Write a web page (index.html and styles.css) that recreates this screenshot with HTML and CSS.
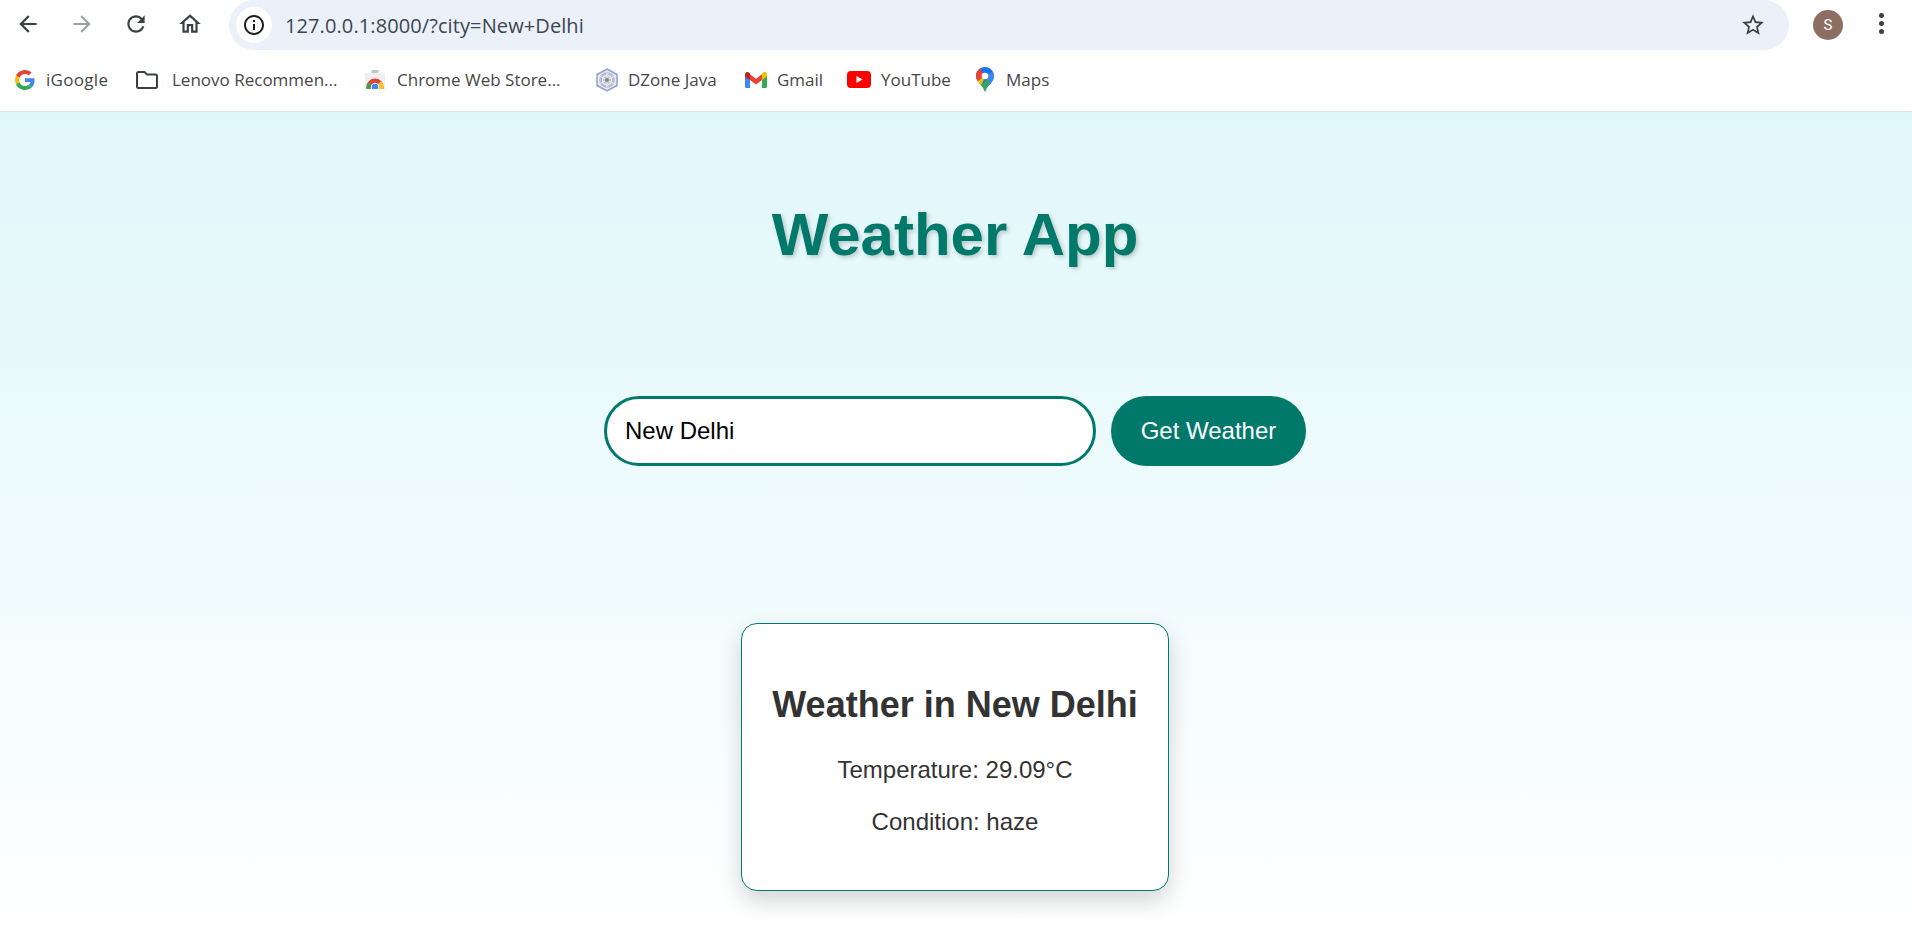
FILE: index.html
```html
<!DOCTYPE html>
<html lang="en">
<head>
<meta charset="utf-8">
<title>Weather App</title>
<link rel="stylesheet" href="styles.css">
</head>
<body>
<header class="chrome">
  <div class="toolbar">
    <div class="nav">
      <svg class="nav-icon" viewBox="0 0 24 24"><path d="M20 11H7.83l5.59-5.59L12 4l-8 8 8 8 1.41-1.41L7.83 13H20v-2z"/></svg>
      <svg class="nav-icon off" viewBox="0 0 24 24"><path d="M12 4l-1.41 1.41L16.17 11H4v2h12.17l-5.58 5.59L12 20l8-8z"/></svg>
      <svg class="nav-icon" viewBox="0 0 24 24"><path d="M17.65 6.35C16.2 4.9 14.21 4 12 4c-4.42 0-7.99 3.58-7.99 8s3.57 8 7.99 8c3.73 0 6.84-2.55 7.73-6h-2.08c-.82 2.33-3.04 4-5.65 4-3.31 0-6-2.69-6-6s2.69-6 6-6c1.66 0 3.14.69 4.22 1.78L13 11h7V4l-2.35 2.35z"/></svg>
      <svg class="nav-icon" viewBox="0 0 24 24"><path d="M12 5.69l5 4.5V18h-2v-6H9v6H7v-7.81l5-4.5M12 3L2 12h3v8h6v-6h2v6h6v-8h3L12 3z"/></svg>
    </div>
    <div class="omnibox">
      <span class="site-info">
        <svg class="info-icon" viewBox="0 0 24 24"><path d="M11 7h2v2h-2zm0 4h2v6h-2zm1-9C6.48 2 2 6.48 2 12s4.48 10 10 10 10-4.48 10-10S17.52 2 12 2zm0 18c-4.41 0-8-3.59-8-8s3.59-8 8-8 8 3.59 8 8-3.59 8-8 8z"/></svg>
      </span>
      <span class="url">127.0.0.1:8000/?city=New+Delhi</span>
      <svg class="star" viewBox="0 0 24 24"><path d="M22 9.24l-7.19-.62L12 2 9.19 8.63 2 9.24l5.46 4.73L5.82 21 12 17.27 18.18 21l-1.64-7.03L22 9.24zM12 15.4l-3.76 2.27 1-4.28-3.32-2.88 4.38-.38L12 6.1l1.71 4.04 4.38.38-3.32 2.88 1 4.28L12 15.4z"/></svg>
    </div>
    <span class="avatar">S</span>
    <span class="menu"><i></i><i></i><i></i></span>
  </div>
  <nav class="bookmarks">
    <a class="bm bm-google">
      <svg class="bm-icon" viewBox="0 0 48 48"><path fill="#EA4335" d="M24 9.5c3.5 0 6.7 1.3 9.1 3.4l6.8-6.8C35.800 2.400 30.200 0 24 0 14.600 0 6.500 5.400 2.600 13.200l7.900 6.200C12.400 13.700 17.700 9.500 24 9.500z"/><path fill="#4285F4" d="M46.900 24.500c0-1.600-.1-3.100-.4-4.500H24v9h12.900c-.6 3-2.200 5.500-4.700 7.200l7.700 6c4.500-4.200 7-10.300 7-17.700z"/><path fill="#FBBC05" d="M10.500 28.600c-.5-1.400-.8-3-.8-4.600s.3-3.200.8-4.600l-7.900-6.200C.900 16.500 0 20.100 0 24s.9 7.500 2.600 10.800l7.900-6.200z"/><path fill="#34A853" d="M24 48c6.500 0 11.900-2.100 15.900-5.800l-7.700-6c-2.200 1.500-4.900 2.300-8.200 2.300-6.300 0-11.600-4.200-13.500-9.900l-7.900 6.200C6.500 42.600 14.600 48 24 48z"/></svg>
      <span>iGoogle</span>
    </a>
    <a class="bm bm-lenovo">
      <svg class="bm-icon folder" viewBox="0 0 24 20"><path fill="none" stroke="#3c4043" stroke-width="2" stroke-linejoin="round" d="M2 3.500a1.500 1.500 0 0 1 1.500-1.500h6l2.500 2.500h8.500A1.500 1.500 0 0 1 22 6v10.500a1.500 1.500 0 0 1-1.500 1.500h-17A1.500 1.500 0 0 1 2 16.500z"/></svg>
      <span>Lenovo Recommen...</span>
    </a>
    <a class="bm bm-store">
      <svg class="bm-icon" viewBox="0 0 20 20">
        <defs><clipPath id="bag"><rect x="0" y="3" width="20" height="16"/></clipPath></defs>
        <rect x="6.500" y="0" width="7" height="3" fill="#c4c4c4"/>
        <rect x="0" y="3" width="20" height="16" fill="#efefef"/>
        <g clip-path="url(#bag)">
          <circle cx="10" cy="17" r="8.500" fill="#db4437"/>
          <path d="M10 17L18.500 17A8.500 8.500 0 0 0 16 11z" fill="#fbc02d"/>
          <path d="M10 17L1.500 17A8.500 8.500 0 0 0 2 21L10 21z" fill="#34a853"/>
          <path d="M1.500 17A8.500 8.500 0 0 1 3 12.500L7 15.500z" fill="#34a853"/>
          <rect x="10" y="17" width="9" height="3" fill="#fbc02d"/>
          <circle cx="10" cy="17" r="4.200" fill="#fff"/>
          <circle cx="10" cy="17" r="3.300" fill="#4285f4"/>
        </g>
      </svg>
      <span>Chrome Web Store...</span>
    </a>
    <a class="bm bm-dzone">
      <svg class="bm-icon" viewBox="0 0 24 24"><path fill="#e6e9f1" stroke="#8c9fdc" stroke-width="1.500" d="M12 1l10 5.500v11L12 23 2 17.500v-11z"/><circle cx="12" cy="12" r="7.800" fill="#b8bdc6"/><circle cx="12" cy="12" r="4.500" fill="none" stroke="#eceef2" stroke-width="1.300"/><path stroke="#eceef2" d="M12 4.200v15.600M5.200 8.100l13.600 7.800M18.800 8.100L5.200 15.900"/><circle cx="12" cy="12" r="2" fill="#808791"/></svg>
      <span>DZone Java</span>
    </a>
    <a class="bm bm-gmail">
      <svg class="bm-icon" viewBox="0 0 22 16"><path fill="#4285F4" d="M0 3v11.500c0 .8.700 1.500 1.500 1.500H5V7.500L0 3z"/><path fill="#34A853" d="M17 7.500V16h3.500c.8 0 1.500-.7 1.500-1.500V3z"/><path fill="#EA4335" d="M5 8V2.200l6 4.500 6-4.500V8l-6 4.500z"/><path fill="#C5221F" d="M0 4.500v-2C0 .5 2.200-.6 3.800.5L5 1.500V8z"/><path fill="#FBBC04" d="M17 8V1.500L18.200.5C19.800-.6 22 .5 22 2.500v2z"/></svg>
      <span>Gmail</span>
    </a>
    <a class="bm bm-youtube">
      <svg class="bm-icon" viewBox="0 0 24 17"><rect width="24" height="17" rx="4" fill="#f00"/><path fill="#fff" d="M9.500 5v7l6-3.500z"/></svg>
      <span>YouTube</span>
    </a>
    <a class="bm bm-maps">
      <svg class="bm-icon" viewBox="0 0 18 25">
        <defs><clipPath id="pin"><path d="M9 0C4 0 0 4 0 9c0 2 .7 3.700 1.800 5.200C4 17.500 7.800 20 9 25c1.200-5 5-7.500 7.200-10.800C17.300 12.700 18 11 18 9 18 4 14 0 9 0z"/></clipPath></defs>
        <g clip-path="url(#pin)">
          <rect width="18" height="25" fill="#1a73e8"/>
          <path d="M18 4L9 9l3 16h6z" fill="#4285f4"/>
          <path d="M0 0h3L9 9 0 15z" fill="#ea4335"/>
          <path d="M0 15L9 9 5 20 0 20z" fill="#fbbc04"/>
          <path d="M12 12L18 25H0L0 20 5 18z" fill="#34a853"/>
          <path d="M13 12l5-3v10l-5 0z" fill="#4285f4"/>
        </g>
        <circle cx="9" cy="9" r="3.300" fill="#fff"/>
      </svg>
      <span>Maps</span>
    </a>
  </nav>
</header>
<main class="page">
  <h1 class="title">Weather App</h1>
  <form class="search">
    <input class="city" type="text" value="New Delhi">
    <button class="go" type="button">Get Weather</button>
  </form>
  <section class="card">
    <h2 class="card-title">Weather in New Delhi</h2>
    <p class="card-line">Temperature: 29.09°C</p>
    <p class="card-line">Condition: haze</p>
  </section>
</main>
</body>
</html>
```
FILE: styles.css
```css
* { box-sizing: border-box; }
html, body { margin: 0; height: 100%; overflow: hidden; }
body {
  display: flex;
  flex-direction: column;
  font-family: "Liberation Sans", Arial, sans-serif;
  background: #fff;
}
.chrome {
  flex: none;
  height: 112px;
  background: #fff;
  border-bottom: 1px solid #d9e3e5;
  font-family: "Open Sans", "Noto Sans", sans-serif;
}
.toolbar {
  display: flex;
  align-items: flex-start;
  height: 50px;
}
.nav {
  display: flex;
  gap: 28px;
  width: 229px;
  padding: 11px 0 0 15px;
}
.nav-icon { width: 26px; height: 26px; fill: #3c4043; flex: none; }
.nav-icon.off { fill: #a0a3a6; }
.omnibox {
  display: flex;
  align-items: center;
  width: 1560px;
  height: 50px;
  padding: 0 23px 0 7px;
  background: #ebf0f9;
  border-radius: 25px;
}
.site-info {
  display: flex;
  align-items: center;
  justify-content: center;
  width: 36px;
  height: 36px;
  border-radius: 50%;
  background: #fff;
  flex: none;
}
.info-icon { width: 24px; height: 24px; fill: #1f1f1f; }
.url {
  flex: 1;
  margin-left: 13px;
  font-size: 20px;
  letter-spacing: 0.1px;
  color: #3c4650;
}
.star { width: 26px; height: 26px; fill: #3c4043; }
.avatar {
  width: 30px;
  height: 30px;
  margin: 10px 0 0 24px;
  border-radius: 50%;
  background: #8d6e63;
  color: #fff;
  font: 15px/30px Roboto, sans-serif;
  text-align: center;
  flex: none;
}
.menu {
  display: flex;
  flex-direction: column;
  gap: 3px;
  margin: 13px 0 0 36px;
}
.menu i { width: 5px; height: 5px; border-radius: 50%; background: #3c4043; }
.bookmarks {
  display: flex;
  align-items: center;
  height: 59px;
  padding: 0 0 0 15px;
  gap: 28px;
  font-size: 17px;
  color: #474747;
}
.bm { display: flex; align-items: center; gap: 11px; white-space: nowrap; }
.bm-icon { width: 20px; height: 20px; flex: none; }
.folder { width: 24px; }
.bm-google span { width: 61px; letter-spacing: 0.3px; }
.bm-lenovo { gap: 13px; }
.bm-lenovo span { width: 165px; }
.bm-store { gap: 12px; }
.bm-store span { width: 170px; }
.bm-dzone { gap: 9px; }
.bm-dzone .bm-icon { width: 24px; height: 24px; }
.bm-dzone span { width: 89px; }
.bm-gmail { gap: 10px; }
.bm-gmail .bm-icon { width: 22px; height: 16px; }
.bm-gmail span { width: 42px; }
.bm-youtube { gap: 10px; }
.bm-youtube .bm-icon { width: 24px; height: 17px; }
.bm-youtube span { width: 67px; }
.bm-maps { gap: 12px; }
.bm-maps .bm-icon { width: 18px; height: 25px; }
.page {
  flex: 1;
  display: flex;
  flex-direction: column;
  align-items: center;
  padding: 88px 2px 0 0;
  background: linear-gradient(180deg, #e0f7fa 0%, #ffffff 100%);
}
.title {
  margin: 0;
  font-size: 60px;
  line-height: 69px;
  font-weight: 700;
  color: #00796b;
  text-shadow: 2px 2px 4px rgba(0, 0, 0, 0.2);
}
.search {
  display: flex;
  gap: 15px;
  margin-top: 127px;
}
.city {
  width: 492px;
  height: 70px;
  padding: 0 18px;
  border: 3px solid #00796b;
  border-radius: 35px;
  background: #fff;
  color: #000;
  font: 24px "Liberation Sans", Arial, sans-serif;
  outline: none;
}
.go {
  width: 195px;
  height: 70px;
  border: 0;
  border-radius: 35px;
  background: #00796b;
  color: #fff;
  font: 24px "Liberation Sans", Arial, sans-serif;
}
.card {
  width: 428px;
  height: 268px;
  margin-top: 157px;
  padding: 60px 20px 0;
  border: 1px solid #00796b;
  border-radius: 16px;
  background: #fff;
  box-shadow: 0 10px 22px rgba(0, 0, 0, 0.17);
  text-align: center;
  color: #333;
}
.card-title {
  margin: 0 0 31px;
  font-size: 36px;
  line-height: 41px;
  font-weight: 700;
}
.card-line {
  margin: 0 0 25px;
  font-size: 24px;
  line-height: 27px;
}
```
